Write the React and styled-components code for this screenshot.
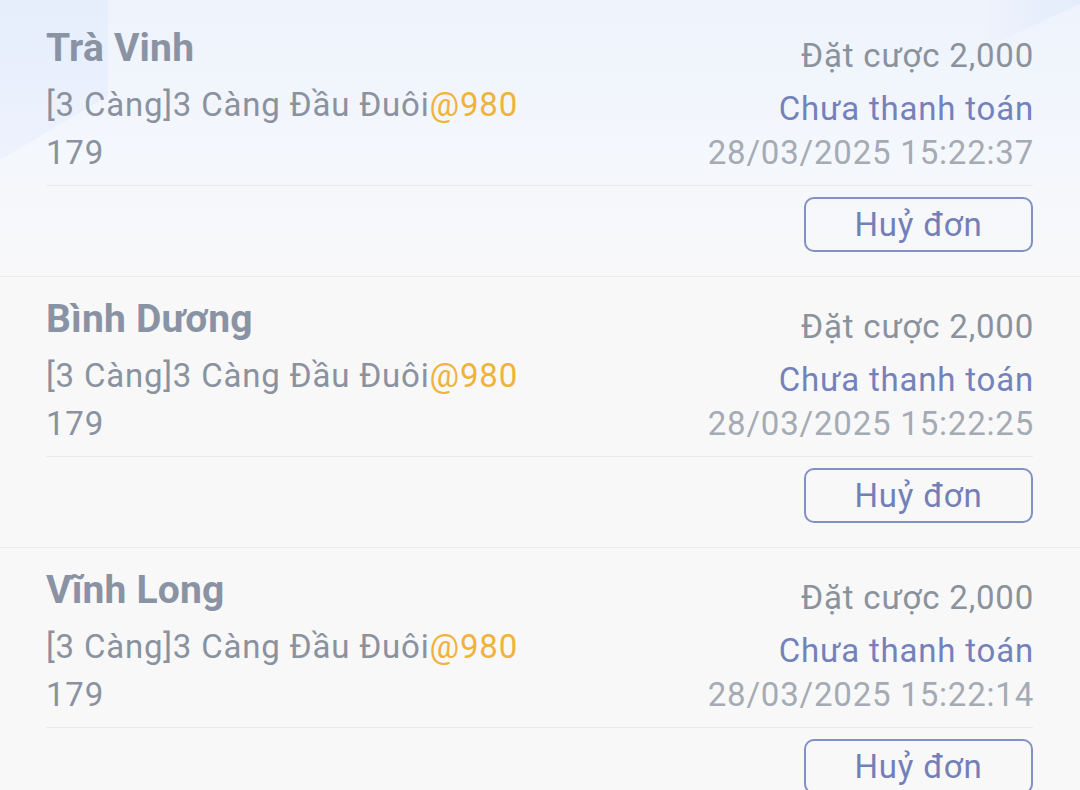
import React from 'react'
import styled, { createGlobalStyle } from 'styled-components'

const GlobalStyle = createGlobalStyle`
  html, body {
    margin: 0;
    padding: 0;
    background: #f8f8f9;
    font-family: Roboto, "Noto Sans", "Liberation Sans", sans-serif;
  }
`

const orders = [
  { id: 1, region: 'Trà Vinh', time: '28/03/2025 15:22:37' },
  { id: 2, region: 'Bình Dương', time: '28/03/2025 15:22:25' },
  { id: 3, region: 'Vĩnh Long', time: '28/03/2025 15:22:14' },
]

function OrderCard({ order }) {
  return (
    <Card>
      <InfoRow>
        <LeftCol>
          <Region>{order.region}</Region>
          <Line>[3 Càng]3 Càng Đầu Đuôi<Odds>@980</Odds></Line>
          <Line>179</Line>
        </LeftCol>
        <RightCol>
          <Bet>Đặt cược 2,000</Bet>
          <Status>Chưa thanh toán</Status>
          <Time>{order.time}</Time>
        </RightCol>
      </InfoRow>
      <Divider />
      <Actions>
        <CancelButton>Huỷ đơn</CancelButton>
      </Actions>
    </Card>
  )
}

export default function App() {
  return (
    <>
      <GlobalStyle />
      <Page>
        <Decor />
        <List>
          {orders.map((o) => (
            <OrderCard key={o.id} order={o} />
          ))}
        </List>
      </Page>
    </>
  )
}

const Page = styled.div`
  position: relative;
  width: 1080px;
  height: 790px;
  overflow: hidden;
  background: linear-gradient(180deg, #eef3fc 0px, #f4f7fc 150px, #f8f8f9 276px, #f8f8f9 100%);
`

const Decor = styled.div`
  position: absolute;
  inset: 0;
  pointer-events: none;

  &::before {
    content: '';
    position: absolute;
    left: 0;
    top: 0;
    width: 108px;
    height: 160px;
    background: linear-gradient(180deg, #e6eefc, #edf2fd);
    clip-path: polygon(0 0, 100% 0, 100% 60%, 0 100%);
  }

  &::after {
    content: '';
    position: absolute;
    right: 0;
    top: 0;
    width: 130px;
    height: 40px;
    background: linear-gradient(90deg, #f1f5fd, #e4ecfb);
    clip-path: polygon(30% 0, 100% 0, 100% 10%, 40% 100%, 30% 100%);
  }
`

const List = styled.div`
  position: relative;
  padding-top: 6px;
`

const Card = styled.div`
  padding: 16px 47px 24px 46px;
  border-bottom: 1px solid #ececee;
`

const InfoRow = styled.div`
  display: flex;
  justify-content: space-between;
  height: 155px;
`

const LeftCol = styled.div`
  display: flex;
  flex-direction: column;
`

const RightCol = styled.div`
  display: flex;
  flex-direction: column;
  align-items: flex-end;
  padding-top: 10px;
`

const Region = styled.div`
  font-size: 39px;
  font-weight: 700;
  line-height: 52px;
  letter-spacing: 0.2px;
  color: #8a93a3;
  margin-bottom: 7px;
`

const Text = styled.div`
  font-size: 33px;
  letter-spacing: 0.8px;
  white-space: nowrap;
`

const Line = styled(Text)`
  line-height: 48px;
  color: #8a929f;
`

const Odds = styled.span`
  color: #f0b33a;
`

const Bet = styled(Text)`
  line-height: 48px;
  margin-right: -1px;
  color: #8a929c;
`

const Status = styled(Text)`
  line-height: 48px;
  margin-top: 5px;
  margin-right: -1px;
  color: #7482bb;
`

const Time = styled(Text)`
  line-height: 40px;
  margin-right: -1px;
  color: #a5abb4;
`

const Divider = styled.div`
  height: 1px;
  background: #ebebed;
  margin-top: 8px;
`

const Actions = styled.div`
  display: flex;
  justify-content: flex-end;
  margin-top: 11px;
`

const CancelButton = styled.button`
  width: 229px;
  height: 55px;
  box-sizing: border-box;
  border: 2px solid #8390c4;
  border-radius: 10px;
  background: transparent;
  font-family: inherit;
  font-size: 33px;
  letter-spacing: 0.8px;
  color: #7380b8;
  padding: 0;
  cursor: pointer;
`
